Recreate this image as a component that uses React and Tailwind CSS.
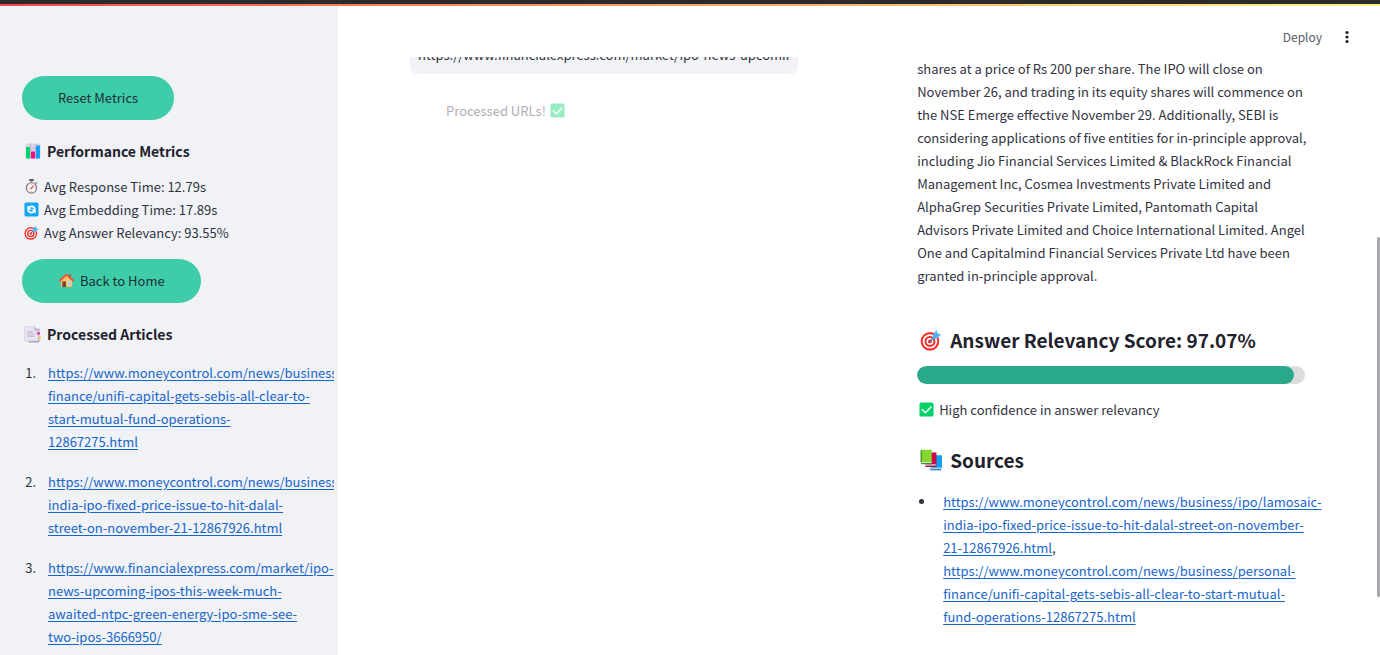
import React from 'react';

function ChartIcon({ className }) {
  return (
    <svg viewBox="0 0 32 32" className={className} aria-hidden="true">
      <rect x="1" y="1" width="30" height="30" rx="4" fill="#d9d3e6" />
      <path d="M1 10h30M11 1v30M21 1v30" stroke="#b9b0cc" strokeWidth="1.5" />
      <rect x="2" y="8" width="8" height="23" rx="1" fill="#00d26a" />
      <rect x="12" y="17" width="8" height="14" rx="1" fill="#f8068c" />
      <rect x="22" y="5" width="8" height="26" rx="1" fill="#0fa2f2" />
    </svg>
  );
}

function StopwatchIcon({ className }) {
  return (
    <svg viewBox="0 0 32 32" className={className} aria-hidden="true">
      <rect x="11" y="0" width="10" height="4" rx="1" fill="#5a5560" />
      <rect x="14" y="3" width="4" height="5" fill="#8a8590" />
      <path d="M25 7l2 2" stroke="#8a8590" strokeWidth="2.5" strokeLinecap="round" />
      <circle cx="16" cy="19" r="11" fill="#f6f4f8" stroke="#858089" strokeWidth="2.5" />
      <path d="M16 10v2M16 26v2M7 19h2M23 19h2" stroke="#9b97a1" strokeWidth="1.5" />
      <path d="M14 21l6-6" stroke="#f0403a" strokeWidth="2.5" strokeLinecap="round" />
    </svg>
  );
}

function RefreshIcon({ className }) {
  return (
    <svg viewBox="0 0 32 32" className={className} aria-hidden="true">
      <rect x="1" y="1" width="30" height="30" rx="4" fill="#12a5f4" />
      <path d="M11 11.500c4-4 11-2.500 12.500 3.500M21 20.500c-4 4-11 2.500-12.500-3.500" fill="none" stroke="#fff" strokeWidth="4" />
      <path d="M7 7v9.500h9.500z" fill="#fff" />
      <path d="M25 25v-9.500h-9.500z" fill="#fff" />
    </svg>
  );
}

function TargetIcon({ className }) {
  return (
    <svg viewBox="0 0 32 32" className={className} aria-hidden="true">
      <circle cx="14.5" cy="18" r="13.5" fill="#f92f2b" />
      <circle cx="14.5" cy="18" r="10.5" fill="#fff" />
      <circle cx="14.5" cy="18" r="8" fill="#f92f2b" />
      <circle cx="14.5" cy="18" r="5" fill="#fff" />
      <circle cx="14.5" cy="18" r="2.8" fill="#f92f2b" />
      <path d="M14.5 18L23 9.5" stroke="#2a7fc4" strokeWidth="2" strokeLinecap="round" />
      <path d="M18.5 9.5L24 1l1.5 5.5L31 8l-7.500 6-5 .5z" fill="#50b9f7" />
      <path d="M19 14l7-7.500" stroke="#2b8fd8" strokeWidth="1" />
    </svg>
  );
}

function HouseIcon({ className }) {
  return (
    <svg viewBox="0 0 32 32" className={className} aria-hidden="true">
      <rect x="21.500" y="3" width="4" height="8" fill="#a5603b" />
      <path d="M4 15L16 5l12 10v15H4z" fill="#fbbf67" />
      <rect x="7" y="18" width="8" height="12" fill="#7a4332" />
      <rect x="18" y="18" width="7.500" height="7" fill="#8ed0fa" stroke="#d9f0ff" strokeWidth="1" />
      <path d="M2 16L16 3.500 30 16" fill="none" stroke="#f0503c" strokeWidth="4" strokeLinecap="round" strokeLinejoin="round" />
    </svg>
  );
}

function BookmarkTabsIcon({ className }) {
  return (
    <svg viewBox="0 0 32 32" className={className} aria-hidden="true">
      <path d="M8 5h21v24a2 2 0 0 1-2 2H10a2 2 0 0 1-2-2z" fill="#a99fb8" />
      <path d="M2 1h17l8 8v17a2 2 0 0 1-2 2H3a2 2 0 0 1-2-2V2z" fill="#e9e4f2" stroke="#cbc3d9" strokeWidth="1" />
      <path d="M19 1l8 8h-6a2 2 0 0 1-2-2z" fill="#bdb3cf" />
      <path d="M6 11h11M6 15h14M6 19h14" stroke="#bdb3cd" strokeWidth="2" />
      <rect x="24" y="12" width="6" height="4" fill="#f0328f" />
      <rect x="27" y="20" width="5" height="4" fill="#fcc93c" />
    </svg>
  );
}

function CheckIcon({ className }) {
  return (
    <svg viewBox="0 0 32 32" className={className} aria-hidden="true">
      <rect x="1" y="1" width="30" height="30" rx="4" fill="#00d26a" />
      <path d="M7 16.500l6.500 6.500L25.500 10.500" fill="none" stroke="#fff" strokeWidth="3" strokeLinecap="round" strokeLinejoin="round" />
    </svg>
  );
}

function BooksIcon({ className }) {
  return (
    <svg viewBox="0 0 32 32" className={className} aria-hidden="true">
      <path d="M16 9h16v18l-2 1v2H15z" fill="#0fa2f2" />
      <path d="M14 27h16v3H15z" fill="#b6c9dc" />
      <path d="M15 29.500h16v1.500H15z" fill="#0b74c4" />
      <path d="M9 5h15v17l-1 3H8z" fill="#ca0b4a" />
      <path d="M7 22h16v2.500H8z" fill="#e3cbd8" />
      <path d="M8 24.500h16V26H8z" fill="#8e0e3b" />
      <path d="M1 2l2-1h14v18H1z" fill="#86d72f" />
      <path d="M1 2l2-1v18H1z" fill="#45953b" />
      <path d="M1 19h16v2H2z" fill="#d9e8cf" />
      <path d="M1 20.500h16V22H2z" fill="#3c8a34" />
    </svg>
  );
}

function DotsIcon({ className }) {
  return (
    <svg viewBox="0 0 16 16" className={className} aria-hidden="true" fill="#1f212b">
      <circle cx="8" cy="3.500" r="1.600" />
      <circle cx="8" cy="8" r="1.600" />
      <circle cx="8" cy="12.500" r="1.600" />
    </svg>
  );
}

const MONEYCONTROL_UNIFI =
  'https://www.moneycontrol.com/news/business/personal-finance/unifi-capital-gets-sebis-all-clear-to-start-mutual-fund-operations-12867275.html';
const MONEYCONTROL_LAMOSAIC =
  'https://www.moneycontrol.com/news/business/ipo/lamosaic-india-ipo-fixed-price-issue-to-hit-dalal-street-on-november-21-12867926.html';
const FINANCIAL_EXPRESS =
  'https://www.financialexpress.com/market/ipo-news-upcoming-ipos-this-week-much-awaited-ntpc-green-energy-ipo-sme-see-two-ipos-3666950/';

const ARTICLES = [MONEYCONTROL_UNIFI, MONEYCONTROL_LAMOSAIC, FINANCIAL_EXPRESS];

const METRICS = [
  { Icon: StopwatchIcon, text: 'Avg Response Time: 12.79s' },
  { Icon: RefreshIcon, text: 'Avg Embedding Time: 17.89s' },
  { Icon: TargetIcon, text: 'Avg Answer Relevancy: 93.55%' },
];

const SCORE = 97.07;

function UrlLink({ href }) {
  return (
    <a href={href} className="text-[#1765c9] underline underline-offset-2">
      {href}
    </a>
  );
}

function PillButton({ children }) {
  return (
    <button type="button" className="flex h-11 items-center gap-1.5 self-start rounded-[22px] bg-[#3fcca9] px-9 pb-0.5 text-[#1d3038]">
      {children}
    </button>
  );
}

function Sidebar() {
  return (
    <aside className="w-[338px] shrink-0 overflow-hidden bg-[#f0f2f6] pr-1">
      <div className="flex h-full flex-col overflow-hidden pt-[70px] pl-[22px] pr-5">
        <PillButton>Reset Metrics</PillButton>
        <h3 className="mt-[19px] flex items-center gap-1.5 pl-[3px] text-sm leading-6 font-semibold text-[#1f212d]">
          <ChartIcon className="size-4" />
          Performance Metrics
        </h3>
        <ul className="mt-3 mb-[15px] pl-0.5">
          {METRICS.map(({ Icon, text }) => (
            <li key={text} className="flex items-center gap-[5px]">
              <Icon className="size-[15px]" />
              {text}
            </li>
          ))}
        </ul>
        <PillButton>
          <HouseIcon className="ml-px size-[15px]" />
          Back to Home
        </PillButton>
        <h3 className="mt-[19px] flex items-center gap-1.5 pl-0.5 text-sm leading-6 font-semibold text-[#1f212d]">
          <BookmarkTabsIcon className="size-[17px]" />
          Processed Articles
        </h3>
        <ol className="mt-[15px] flex list-decimal flex-col gap-[17px] pl-[17px]">
          {ARTICLES.map((url) => (
            <li key={url} className="pl-[9px]">
              <UrlLink href={url} />
            </li>
          ))}
        </ol>
      </div>
    </aside>
  );
}

function Header() {
  return (
    <header className="flex h-[51px] shrink-0 items-center justify-end gap-[17px] pt-2.5 pr-[25px] text-xs text-[#5a5c68]">
      <button type="button">Deploy</button>
      <button type="button" aria-label="Main menu">
        <DotsIcon className="size-4" />
      </button>
    </header>
  );
}

function UrlColumn() {
  return (
    <section className="min-w-0">
      <input
        type="text"
        aria-label="URL 3"
        defaultValue={FINANCIAL_EXPRESS}
        className="-mt-[23px] block h-10 w-full rounded-lg bg-[#f0f2f6] px-2 outline-none"
      />
      <p className="mt-[25px] flex items-center gap-1 pl-9 opacity-40">
        Processed URLs!
        <CheckIcon className="size-[15px]" />
      </p>
    </section>
  );
}

function AnswerColumn() {
  return (
    <section className="min-w-0">
      <p className="-mr-1">
        shares at a price of Rs 200 per share. The IPO will close on November 26, and trading in its equity shares will
        commence on the NSE Emerge effective November 29. Additionally, SEBI is considering applications of five
        entities for in-principle approval, including Jio Financial Services Limited &amp; BlackRock Financial
        Management Inc, Cosmea Investments Private Limited and AlphaGrep Securities Private Limited, Pantomath Capital
        Advisors Private Limited and Choice International Limited. Angel One and Capitalmind Financial Services Private
        Ltd have been granted in-principle approval.
      </p>
      <h2 className="mt-[37px] flex items-center gap-2 pl-[3px] text-[19px] leading-8 font-semibold text-[#1f212d]">
        <TargetIcon className="size-[22px]" />
        Answer Relevancy Score: {SCORE}%
      </h2>
      <div
        role="progressbar"
        aria-label="Answer relevancy"
        aria-valuenow={SCORE}
        aria-valuemin={0}
        aria-valuemax={100}
        className="mt-2.5 h-[18px] overflow-hidden rounded-full bg-[#dddddd]"
      >
        <div className="h-full rounded-full bg-[#2aa98a]" style={{ width: `${SCORE}%` }} />
      </div>
      <p className="mt-3.5 flex items-center gap-[5px] pl-0.5">
        <CheckIcon className="size-[15px]" />
        High confidence in answer relevancy
      </p>
      <h2 className="mt-[23px] flex items-center gap-2 pl-[3px] text-[19px] leading-8 font-semibold text-[#1f212d]">
        <BooksIcon className="size-[22px]" />
        Sources
      </h2>
      <ul className="mt-3.5 list-disc pl-[19px]">
        <li className="pl-[7px]">
          <UrlLink href={MONEYCONTROL_LAMOSAIC} />, <UrlLink href={MONEYCONTROL_UNIFI} />
        </li>
      </ul>
    </section>
  );
}

export default function App() {
  return (
    <div className="relative flex h-screen flex-col overflow-hidden bg-white font-['Noto_Sans_CJK_SC',sans-serif] text-[13px] leading-[23px] text-[#31333f]">
      <div className="h-1 shrink-0 bg-[#2b2a2d]" />
      <div className="h-0.5 shrink-0 bg-linear-to-r from-[#f2474b] to-[#fbf37c]" />
      <div className="flex min-h-0 flex-1">
        <Sidebar />
        <div className="flex min-w-0 flex-1 flex-col">
          <Header />
          <main className="grid min-h-0 flex-1 grid-cols-[13fr_4fr_13fr] overflow-hidden pr-[75px] pl-[72px]">
            <UrlColumn />
            <div />
            <AnswerColumn />
          </main>
        </div>
      </div>
      <div className="absolute top-[237px] right-0 h-[360px] w-[3px] rounded-full bg-[#a9a9ad]" />
    </div>
  );
}
